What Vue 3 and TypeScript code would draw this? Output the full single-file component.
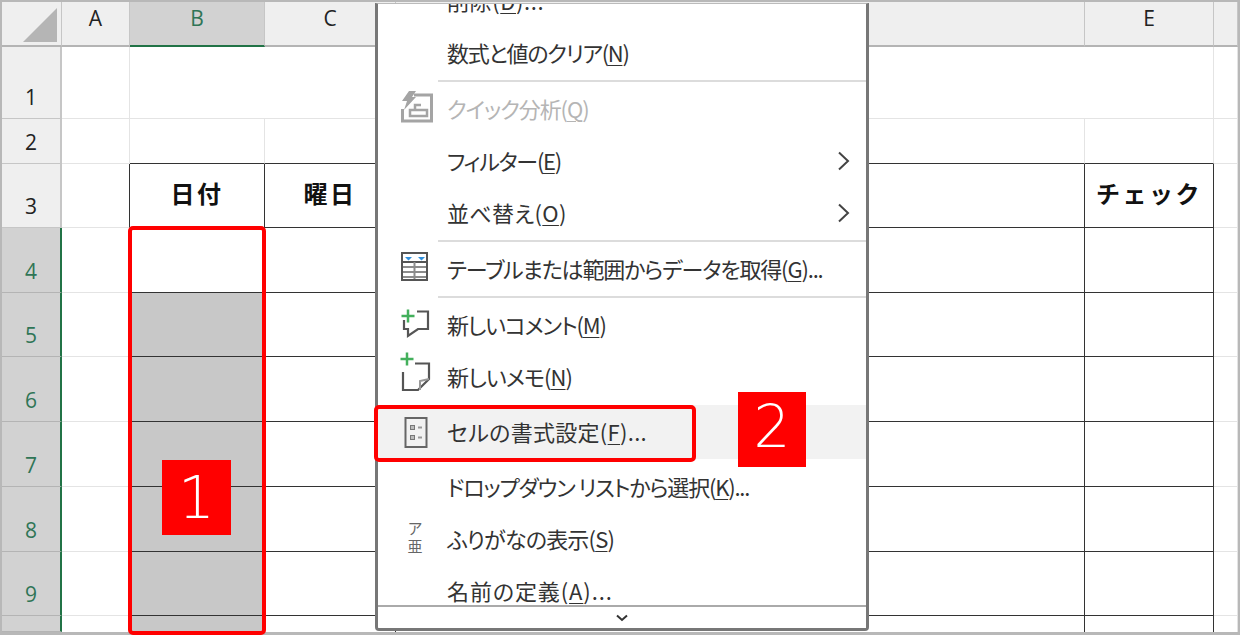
<script setup lang="ts">
type Cell = { key: string; text?: string; cls: string; span?: number }
type Item = {
  label: string
  key: string
  tail?: string
  sep?: boolean
  more?: boolean
  off?: boolean
  hover?: boolean
  icon?: string
  ls: number
}

const colLetters = ['A', 'B', 'C', '', 'E', '']

// 行ごとのセルを組み立てる
const cells: Cell[] = []
cells.push({ key: 'corner', cls: 'corner' })
colLetters.forEach((c, i) => {
  cells.push({ key: 'h' + i, text: c, cls: i === 1 ? 'col-head picked' : 'col-head' })
})
for (let r = 1; r <= 10; r++) {
  const active = r >= 4
  cells.push({ key: 'r' + r, text: r === 10 ? '' : String(r), cls: active ? 'row-head active' : 'row-head' })
  const last = r === 10 ? ' last' : ''
  if (r === 1) {
    cells.push({ key: 'a1', cls: 'cell' })
    cells.push({ key: 'm1', cls: 'cell', span: 4 })
    cells.push({ key: 'f1', cls: 'cell' })
    continue
  }
  cells.push({ key: 'a' + r, cls: 'cell' + (r >= 3 ? ' dark-right' : '') + last })
  const names = ['b', 'c', 'd', 'e']
  names.forEach((n) => {
    let cls = 'cell'
    if (r === 2) cls += ' dark-bottom'
    if (r >= 3) cls += ' boxed'
    if (n === 'b' && r >= 5) cls += ' filled'
    let text = ''
    if (r === 3) {
      if (n === 'b') text = '日付'
      if (n === 'c') text = '曜日'
      if (n === 'e') text = 'チェック'
      cls += ' title'
    }
    cells.push({ key: n + r, text, cls: cls + last })
  })
  cells.push({ key: 'f' + r, cls: 'cell' + last })
}

// ls: 元画面の文字幅に合わせるための字間
const items: Item[] = [
  { label: '削除(', key: 'D', tail: ')...', ls: 0.6 },
  { label: '数式と値のクリア(', key: 'N', tail: ')', sep: true, ls: -1.27 },
  { label: 'クイック分析(', key: 'Q', tail: ')', off: true, icon: 'quick', ls: -1.1 },
  { label: 'フィルター(', key: 'E', tail: ')', more: true, ls: -1.3 },
  { label: '並べ替え(', key: 'O', tail: ')', more: true, sep: true, ls: 0.3 },
  { label: 'テーブルまたは範囲からデータを取得(', key: 'G', tail: ')...', sep: true, icon: 'table', ls: -1.15 },
  { label: '新しいコメント(', key: 'M', tail: ')', icon: 'comment', ls: -1.2 },
  { label: '新しいメモ(', key: 'N', tail: ')', icon: 'memo', ls: -0.9 },
  { label: 'セルの書式設定(', key: 'F', tail: ')...', hover: true, icon: 'format', ls: 0.3 },
  { label: 'ドロップダウン リストから選択(', key: 'K', tail: ')...', ls: -1.2 },
  { label: 'ふりがなの表示(', key: 'S', tail: ')', icon: 'kana', ls: -0.8 },
  { label: '名前の定義(', key: 'A', tail: ')...', ls: 0.9 },
]
</script>

<template>
  <div class="sheet">
    <div class="grid">
      <div
        v-for="c in cells"
        :key="c.key"
        :class="c.cls"
        :style="c.span ? { gridColumn: 'span ' + c.span } : undefined"
      >
        <svg v-if="c.cls === 'corner'" width="36" height="36" viewBox="0 0 36 36">
          <path d="M35 1V35H1Z" fill="#b5b5b5" />
        </svg>
        <span v-else-if="c.text">{{ c.text }}</span>
      </div>
    </div>

    <!-- 右クリックメニュー -->
    <div class="menu">
      <div class="menu-list">
        <template v-for="it in items" :key="it.label">
          <div class="item" :class="{ off: it.off, hover: it.hover }">
            <div class="item-icon">
              <svg v-if="it.icon === 'quick'" width="36" height="52" viewBox="0 -1 36 52" fill="none" stroke="#a4a4a4">
                <path d="M17 11H34.500V37H5.500V25" stroke-width="3" />
                <path d="M12 7H19L15 13H19L7 26L10 17H5Z" fill="#a4a4a4" stroke="none" />
                <rect x="13" y="26" width="17" height="6" stroke-width="2.500" />
                <path d="M18 26V21H24" stroke-width="2.500" />
              </svg>
              <svg v-else-if="it.icon === 'table'" width="36" height="52" viewBox="0 -1 36 52" fill="none">
                <path d="M5 18H30" stroke="#555" stroke-width="2" />
                <path d="M5 23H30M5 28H30M5 33H30M17.500 18V36" stroke="#8c8c8c" stroke-width="2" />
                <rect x="5" y="9" width="25" height="27" stroke="#555" stroke-width="2" />
                <path d="M8 13H15L11.500 16.500ZM21 13H28L24.500 16.500Z" fill="#2f8fdc" />
              </svg>
              <svg v-else-if="it.icon === 'comment'" width="36" height="52" viewBox="0 -1 36 52" fill="none">
                <path d="M20 11.500H31V29H21L11 36V29H7V20" stroke="#555" stroke-width="2.200" />
                <path d="M11 9.500V22.500M4.500 16H17.500" stroke="#43b05c" stroke-width="2.500" />
              </svg>
              <svg v-else-if="it.icon === 'memo'" width="36" height="52" viewBox="0 -1 36 52" fill="none">
                <path d="M18 11.500H32V27L21 38H6V20" stroke="#555" stroke-width="2.200" />
                <path d="M32 27L23 29V38" stroke="#999" stroke-width="2" />
                <path d="M10 0.500V13.500M3.500 7H16.500" stroke="#43b05c" stroke-width="2.500" />
              </svg>
              <svg v-else-if="it.icon === 'format'" width="36" height="52" viewBox="0 0 36 52" fill="none">
                <rect x="8.500" y="12" width="21" height="29" stroke="#666" stroke-width="2" />
                <rect x="13.500" y="19.500" width="4" height="4" fill="#bbb" stroke="#777" />
                <rect x="13.500" y="29.500" width="4" height="4" fill="#bbb" stroke="#777" />
                <path d="M21 21.500H25M21 31.500H25" stroke="#999" stroke-width="2" />
              </svg>
              <span v-else-if="it.icon === 'kana'" class="kana"><span>ア</span><span>亜</span></span>
            </div>
            <span class="label" :style="{ letterSpacing: it.ls + 'px' }">{{ it.label }}<u>{{ it.key }}</u>{{ it.tail }}</span>
            <svg v-if="it.more" class="more" width="13" height="20" viewBox="0 0 13 20" fill="none">
              <path d="M2 1.500L11 10L2 18.500" stroke="#444" stroke-width="2" />
            </svg>
          </div>
          <div v-if="it.sep" class="sep"></div>
        </template>
      </div>
      <div class="scroller">
        <svg width="12" height="8" viewBox="0 0 12 8" fill="none">
          <path d="M1 1.500L6 6L11 1.500" stroke="#333" stroke-width="2" />
        </svg>
      </div>
    </div>

    <!-- 注釈 -->
    <div class="mark mark-col"></div>
    <div class="mark mark-item"></div>
    <div class="tag tag-one">1</div>
    <div class="tag tag-two">2</div>
  </div>
</template>

<style scoped>
.sheet {
  position: relative;
  width: 1240px;
  height: 635px;
  box-sizing: border-box;
  border: 2px solid #b8b8b8;
  border-bottom-width: 3px;
  background: #fff;
  font-family: "Noto Sans CJK JP", "Noto Sans", sans-serif;
  color: #222;
}

.grid {
  display: grid;
  grid-template-columns: 60px 68px 135px 131px 689px 129px 24px;
  grid-template-rows: 45px 72px 45px 64px 65px 64px 65px 65px 65px 64px 16px;
}

.corner {
  display: flex;
  align-items: flex-start;
  padding: 5px 0 0 20px;
  box-sizing: border-box;
  background: #efefef;
  border-right: 1px solid #c6c6c6;
  border-bottom: 2px solid #b4b4b4;
}

.col-head {
  display: flex;
  justify-content: center;
  padding-top: 1px;
  box-sizing: border-box;
  background: #efefef;
  border-right: 1px solid #c6c6c6;
  border-bottom: 2px solid #b4b4b4;
  font-family: "Open Sans", sans-serif;
  font-size: 21px;
  line-height: 30px;
}

.col-head.picked {
  background: #d2d2d2;
  color: #2f7556;
  border-bottom-color: #217346;
}

.row-head {
  display: flex;
  align-items: flex-end;
  justify-content: center;
  padding-bottom: 6px;
  box-sizing: border-box;
  background: #efefef;
  border-right: 2px solid #c6c6c6;
  border-bottom: 1px solid #c6c6c6;
  font-family: "Open Sans", sans-serif;
  font-size: 21px;
  line-height: 30px;
}

.row-head.active {
  background: #d2d2d2;
  color: #2f7556;
  border-right-color: #217346;
  border-bottom-color: #b4b4b4;
}

.cell {
  display: flex;
  align-items: center;
  justify-content: center;
  box-sizing: border-box;
  border-right: 1px solid #e4e4e4;
  border-bottom: 1px solid #e4e4e4;
}

.dark-right {
  border-right-color: #333;
}

.dark-bottom {
  border-bottom-color: #333;
}

.boxed {
  border-right-color: #333;
  border-bottom-color: #333;
}

.filled {
  background: #c8c8c8;
}

.last {
  border-bottom: 0;
}

.title {
  padding-bottom: 6px;
  font-size: 24px;
  font-weight: 700;
  letter-spacing: 2.500px;
  color: #111;
}

.menu {
  position: absolute;
  left: 373px;
  top: 1px;
  width: 494px;
  height: 628px;
  box-sizing: border-box;
  display: flex;
  flex-direction: column;
  background: #fff;
  border: 3px solid #777;
  border-top: 1px solid #bbb;
  border-radius: 0 0 4px 4px;
  overflow: hidden;
}

.menu-list {
  flex: 1;
  min-height: 0;
  margin-top: -29px;
  overflow: hidden;
}

.item {
  display: flex;
  align-items: center;
  height: 52px;
  position: relative;
  font-size: 22px;
  font-feature-settings: "palt";
  color: #333;
}

.item.hover {
  height: 54px;
  background: #f2f2f2;
  margin: 2px 0;
}

.item.off {
  color: #b5b5b5;
}

.item-icon {
  flex: none;
  width: 69px;
  height: 52px;
  display: flex;
  justify-content: center;
  align-items: center;
  padding-left: 5px;
  box-sizing: border-box;
}

.label {
  padding-bottom: 2px;
  white-space: nowrap;
}

.label u {
  text-underline-offset: 3px;
  text-decoration-thickness: 1px;
}

.more {
  position: absolute;
  right: 16px;
  top: 16px;
}

.kana {
  display: flex;
  flex-direction: column;
  align-items: center;
  margin-bottom: 4px;
  font-size: 15px;
  line-height: 18px;
  color: #666;
}

.sep {
  height: 2px;
  margin: 1px 0 1px 60px;
  background: #dcdcdc;
}

.scroller {
  flex: none;
  height: 23px;
  display: flex;
  justify-content: center;
  align-items: center;
  border-top: 2px solid #aaa;
  box-sizing: border-box;
}

.mark {
  position: absolute;
  box-sizing: border-box;
  border: 4px solid #f00;
  border-radius: 5px;
}

.mark-col {
  left: 126px;
  top: 224px;
  width: 138px;
  height: 409px;
}

.mark-item {
  left: 372px;
  top: 403px;
  width: 322px;
  height: 57px;
}

.tag {
  position: absolute;
  display: flex;
  align-items: center;
  justify-content: center;
  background: #f00;
  color: #fff;
  font-family: "DejaVu Sans", sans-serif;
  font-weight: 200;
  font-size: 58px;
}

.tag-one {
  left: 160px;
  top: 458px;
  width: 69px;
  height: 75px;
}

.tag-two {
  left: 736px;
  top: 390px;
  width: 68px;
  height: 75px;
  padding-bottom: 5px;
  box-sizing: border-box;
}
</style>
